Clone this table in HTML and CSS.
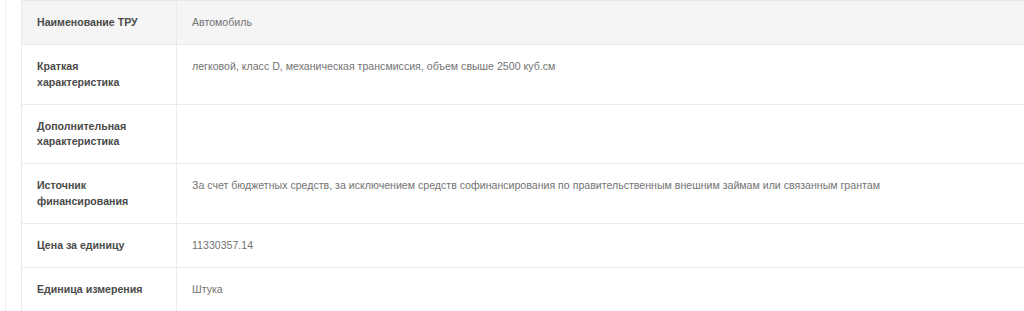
FILE: index.html
```html
<!DOCTYPE html>
<html lang="ru">
<head>
<meta charset="utf-8">
<link rel="stylesheet" href="styles.css">
</head>
<body>
<div class="page">
  <table class="info">
    <tr class="head"><th>Наименование ТРУ</th><td>Автомобиль</td></tr>
    <tr><th>Краткая<br>характеристика</th><td>легковой, класс D, механическая трансмиссия, объем свыше 2500 куб.см</td></tr>
    <tr><th>Дополнительная<br>характеристика</th><td></td></tr>
    <tr><th>Источник<br>финансирования</th><td>За счет бюджетных средств, за исключением средств софинансирования по правительственным внешним займам или связанным грантам</td></tr>
    <tr><th>Цена за единицу</th><td>11330357.14</td></tr>
    <tr><th>Единица измерения</th><td>Штука</td></tr>
  </table>
</div>
</body>
</html>
```
FILE: styles.css
```css
html, body {
  margin: 0;
  padding: 0;
  background: #fff;
}
body {
  font-family: "Liberation Sans", Arial, sans-serif;
  font-size: 10.6px;
  line-height: 15.3px;
}
.page {
  margin-left: 5px;
  border-left: 1px solid #f0f0f0;
  padding-left: 15px;
}
.info {
  border-collapse: collapse;
  width: 1010px;
  border-left: 1px solid #eaeaea;
  border-top: 1px solid #e8e8e8;
}
.info th, .info td {
  padding: 14px 15px 14px;
  vertical-align: top;
  text-align: left;
  border-bottom: 1px solid #ebebeb;
}
.info th {
  width: 124px;
  font-weight: bold;
  color: #4a4a4a;
  border-right: 1px solid #ebebeb;
}
.info td {
  color: #737373;
}
.info .head th, .info .head td {
  background: #f5f5f5;
}
```
